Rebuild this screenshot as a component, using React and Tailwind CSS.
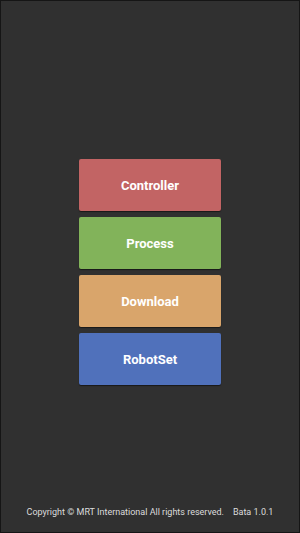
export default function App() {
  const btns = [
    { label: "Controller", cls: "bg-[#c26464]" },
    { label: "Process", cls: "bg-[#82b35a]" },
    { label: "Download", cls: "bg-[#d9a56b]" },
    { label: "RobotSet", cls: "bg-[#5071bb]" },
  ];
  return (
    <div className="w-[300px] h-[533px] bg-[#303030] border border-[#151515] flex flex-col" style={{ fontFamily: "Roboto, 'Liberation Sans', sans-serif" }}>
      <div className="flex-1 flex flex-col items-center pt-[158px] gap-[6px]">
        {btns.map((b) => (
          <div key={b.label} className={`${b.cls} w-[142px] h-[52px] rounded-[2px] flex items-center justify-center text-white font-bold text-[13px] pt-[1px] shadow-[0_1px_1px_rgba(0,0,0,0.5)]`}>
            {b.label}
          </div>
        ))}
      </div>
      <div className="h-[20px] flex items-start justify-center text-[9px] text-[#dcdcdc] mb-[6px] whitespace-pre">
        Copyright © MRT International All rights reserved.    Bata 1.0.1
      </div>
    </div>
  );
}
